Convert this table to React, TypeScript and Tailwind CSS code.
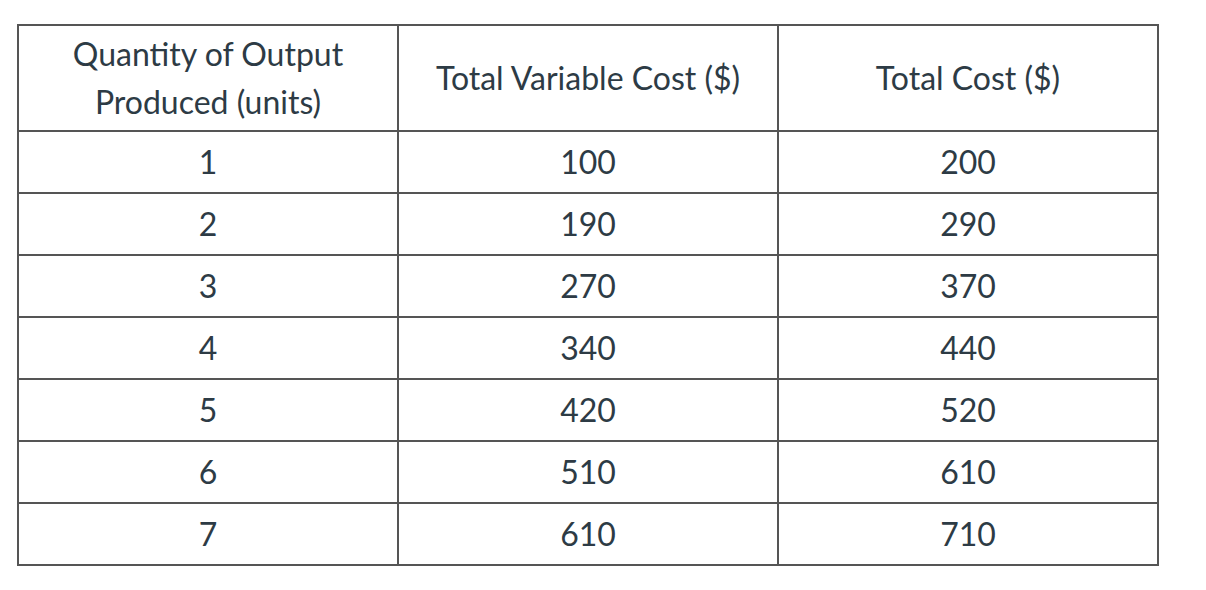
const rows = [
  [1, 100, 200],
  [2, 190, 290],
  [3, 270, 370],
  [4, 340, 440],
  [5, 420, 520],
  [6, 510, 610],
  [7, 610, 710],
]

export default function App() {
  return (
    <div className="min-h-screen bg-white pl-[17px] pt-[24px] font-['Lato',sans-serif] text-[#2d3b45]">
      <table className="w-[1140px] table-fixed border-collapse border-2 border-[#555] text-center text-[32px] leading-[48px]">
        <thead>
          <tr className="h-[106px]">
            <th className="w-[380px] border-2 border-[#555] font-normal">
              Quantity of Output
              <br />
              Produced (units)
            </th>
            <th className="w-[380px] border-2 border-[#555] font-normal">Total Variable Cost ($)</th>
            <th className="w-[380px] border-2 border-[#555] font-normal">Total Cost ($)</th>
          </tr>
        </thead>
        <tbody>
          {rows.map(([q, tvc, tc]) => (
            <tr key={q} className="h-[62px]">
              <td className="border-2 border-[#555]">{q}</td>
              <td className="border-2 border-[#555]">{tvc}</td>
              <td className="border-2 border-[#555]">{tc}</td>
            </tr>
          ))}
        </tbody>
      </table>
    </div>
  )
}
